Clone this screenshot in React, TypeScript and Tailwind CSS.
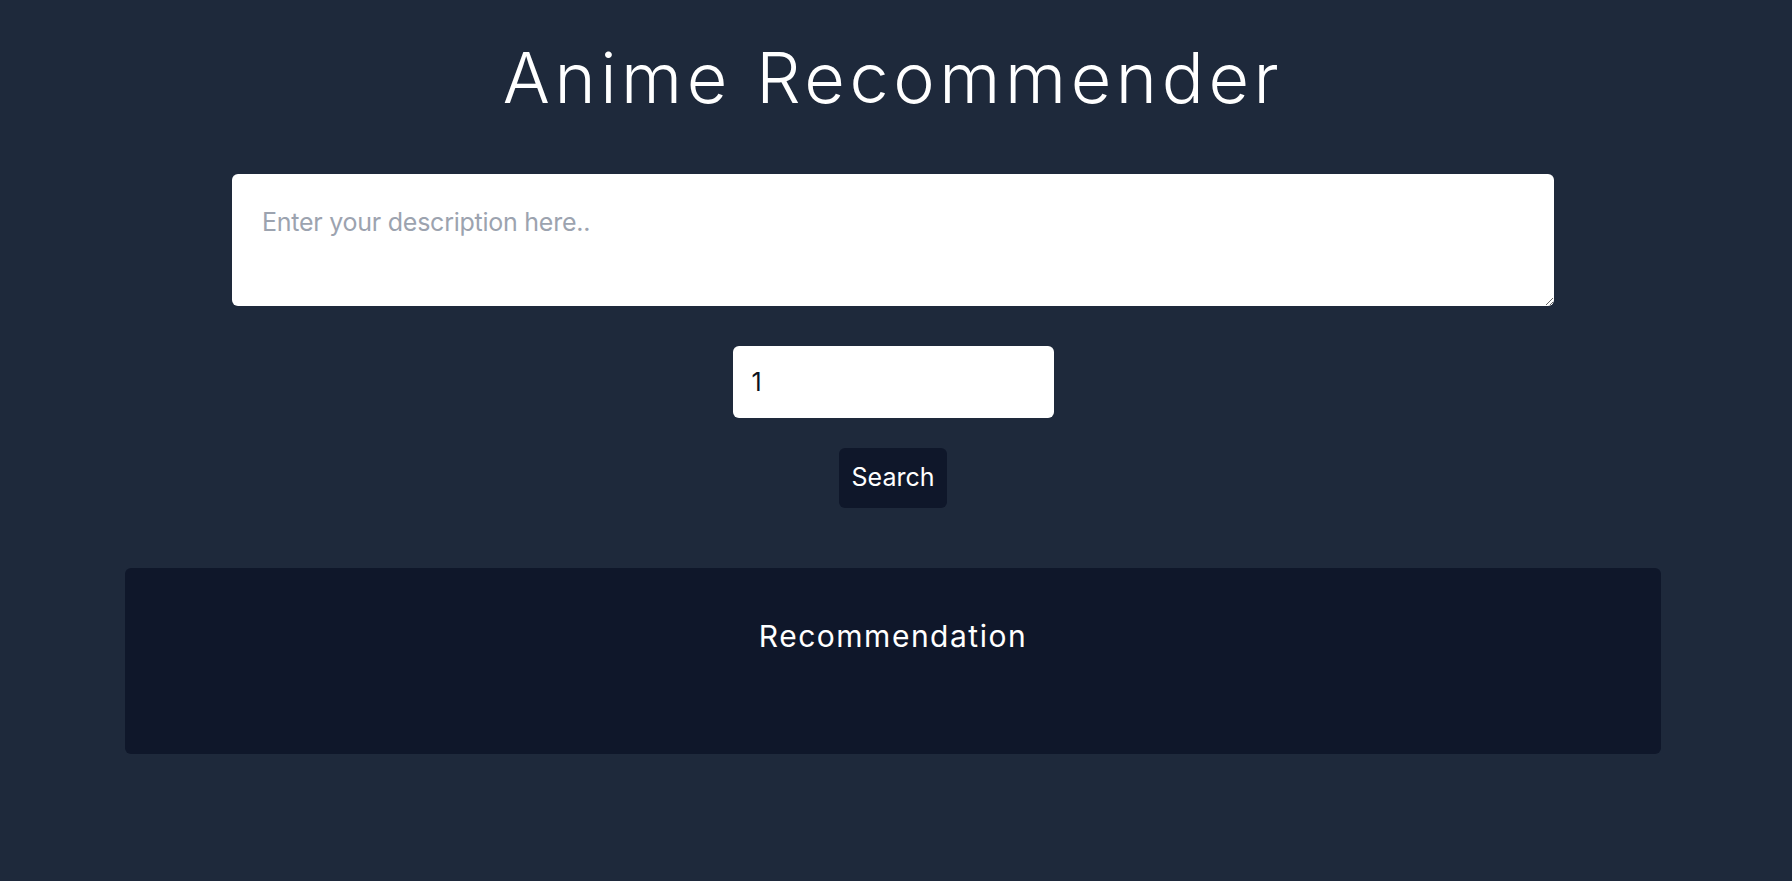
export default function App() {
  return (
    <div className="min-h-screen bg-[#1e293b] font-['Inter','Noto_Sans',sans-serif] text-white">
      <div className="w-[1786px] flex flex-col items-center">
        <h1 className="mt-[43px] text-[70px] font-light leading-none tracking-[4.6px]">Anime Recommender</h1>

        <textarea
          className="mt-[61px] w-[1322px] h-[132px] rounded-md bg-white p-[30px] text-[25px] leading-normal tracking-[-0.25px] text-slate-900 placeholder:text-[#9ca3af] outline-none"
          placeholder="Enter your description here.."
        />

        <input
          type="number"
          defaultValue={1}
          className="mt-[40px] w-[321px] h-[72px] rounded-md bg-white px-[19px] text-[25px] text-[#0b1220] outline-none"
        />

        <button className="mt-[30px] h-[60px] px-[13px] rounded-md bg-[#0f172a] text-[25px] text-white">
          Search
        </button>

        <div className="mt-[60px] w-[1536px] h-[186px] rounded-md bg-[#0f172a] flex flex-col items-center pt-[46px]">
          <h2 className="text-[30px] leading-normal tracking-[1.5px]">Recommendation</h2>
        </div>
      </div>
    </div>
  );
}
